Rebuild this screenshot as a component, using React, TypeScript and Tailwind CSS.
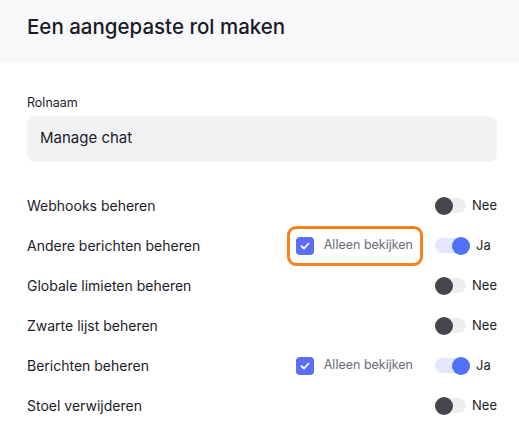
import React from "react";

type Row = { label: string; on: boolean; check?: boolean; highlight?: boolean };

const rows: Row[] = [
  { label: "Webhooks beheren", on: false },
  { label: "Andere berichten beheren", on: true, check: true, highlight: true },
  { label: "Globale limieten beheren", on: false },
  { label: "Zwarte lijst beheren", on: false },
  { label: "Berichten beheren", on: true, check: true },
  { label: "Stoel verwijderen", on: false },
];

function Toggle({ on }: { on: boolean }) {
  return (
    <div className="relative w-[35px] h-[18px] flex items-center">
      <div className={`w-full h-[15px] rounded-full ${on ? "bg-[#e3e7ff]" : "bg-[#eeeeef]"}`} />
      <div
        className={`absolute top-0 w-[18px] h-[18px] rounded-full ${on ? "right-0 bg-[#4f70f8]" : "left-0 bg-[#45454f]"}`}
      />
    </div>
  );
}

function Check() {
  return (
    <div className="w-[18px] h-[18px] rounded-[4px] bg-[#5b6ef5] flex items-center justify-center">
      <svg width="12" height="12" viewBox="0 0 12 12" fill="none">
        <path d="M2.5 6.2 L5 8.5 L9.5 3.5" stroke="white" strokeWidth="1.8" strokeLinecap="round" strokeLinejoin="round" />
      </svg>
    </div>
  );
}

export default function App() {
  return (
    <div className="w-[519px] h-[423px] bg-white overflow-hidden text-[#1b1b28]" style={{ fontFamily: "Inter, 'Noto Sans', sans-serif" }}>
      <div className="h-[62px] bg-[#f7f8fa] flex items-center px-[27px]">
        <h1 className="text-[20.5px] font-medium leading-none pb-[8px]">Een aangepaste rol maken</h1>
      </div>
      <div className="pl-[27px] pr-[22px] pt-[35px]">
        <div className="text-[12.5px] leading-none mb-[6px]">Rolnaam</div>
        <div className="h-[46px] rounded-[8px] bg-[#f1f2f4] flex items-center px-[13px] text-[15px]">Manage chat</div>
        <div className="mt-[24px] flex flex-col">
          {rows.map((r) => (
            <div key={r.label} className="h-[40px] flex items-center">
              <div className="flex-1 text-[14px]">{r.label}</div>
              {r.check && (
                <div
                  className={`mr-[12px] h-[40px] flex items-center gap-[10px] pl-[6px] pr-[7px] rounded-[9px] border-[3px] ${r.highlight ? "border-[#f7821b]" : "border-transparent"}`}
                >
                  <Check />
                  <span className="text-[12.5px] text-[#6b6b78]">Alleen bekijken</span>
                </div>
              )}
              <div className="w-[62px] flex items-center gap-[6px]">
                <Toggle on={r.on} />
                <span className="text-[13px]">{r.on ? "Ja" : "Nee"}</span>
              </div>
            </div>
          ))}
        </div>
      </div>
    </div>
  );
}
